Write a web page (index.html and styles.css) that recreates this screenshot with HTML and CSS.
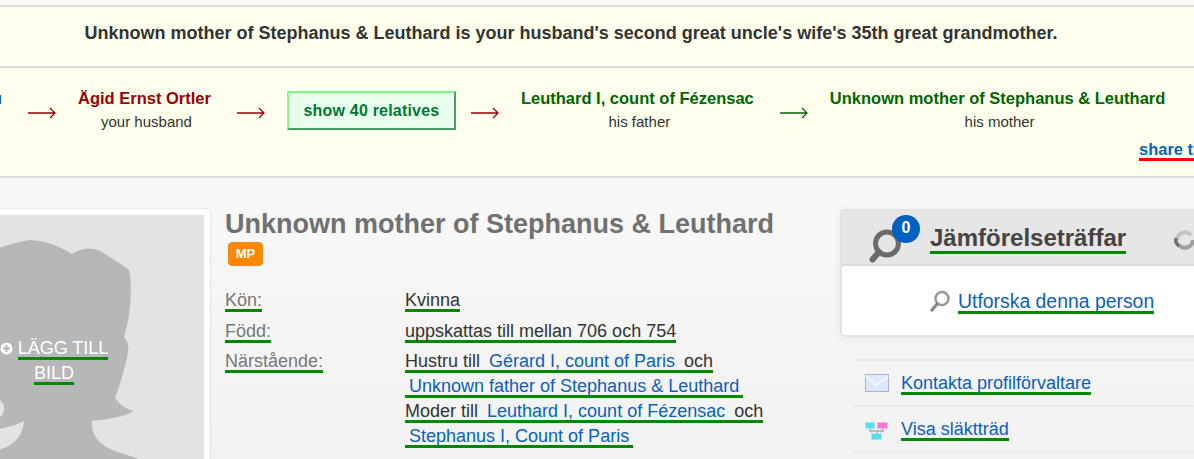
FILE: index.html
```html
<!DOCTYPE html>
<html lang="sv">
<head>
  <meta charset="UTF-8">
  <title>Unknown mother of Stephanus &amp; Leuthard</title>
  <link rel="stylesheet" href="styles.css">
</head>
<body>
  <div class="relation">
    <div class="relation-title">Unknown mother of Stephanus &amp; Leuthard is your husband's second great uncle's wife's 35th great grandmother.</div>

    <div class="relation-path">
      <div class="path-row">
        <div class="path-start"><a href="#">You</a></div>
        <svg class="arrow arrow-red" width="28" height="14" viewBox="0 0 28 14"><path d="M0 7H27M22 2L27 7L22 12"/></svg>
        <div class="path-person">
          <a class="name-red" href="#">Ägid Ernst Ortler</a>
          <span>your husband</span>
        </div>
        <svg class="arrow arrow-red" width="28" height="14" viewBox="0 0 28 14"><path d="M0 7H27M22 2L27 7L22 12"/></svg>
        <a class="show-btn" href="#">show 40 relatives</a>
        <svg class="arrow arrow-red" width="28" height="14" viewBox="0 0 28 14"><path d="M0 7H27M22 2L27 7L22 12"/></svg>
        <div class="path-person">
          <a class="name-green" href="#">Leuthard I, count of Fézensac</a>
          <span>his father</span>
        </div>
        <svg class="arrow arrow-green" width="28" height="14" viewBox="0 0 28 14"><path d="M0 7H27M22 2L27 7L22 12"/></svg>
        <div class="path-person">
          <a class="name-green" href="#">Unknown mother of Stephanus &amp; Leuthard</a>
          <span>his mother</span>
        </div>
      </div>
      <a class="share" href="#">share this</a>
    </div>
  </div>

  <div class="profile">
    <div class="photo-card">
      <svg class="silhouette" width="288" height="288" viewBox="-84 215 288 288">
        <path d="M-84 503V310C-60 275 -25 250 30 240C50 241 62 248 72 254C80 248 92 246 102 252C112 259 122 264 129 270C132 280 131 300 129 315C127 328 125 332 124 337C128 342 129 346 128 352C126 365 120 385 115 398C120 405 126 409 134 411C126 416 112 419 92 421C91 432 96 442 110 449C125 455 140 458 165 470V503Z"/>
        <path class="cutout" d="M-4 397C2 400 5 405 4 410C3 415 0 418 -4 420ZM-4 429C8 428 16 425 24 421C23 430 20 437 14 442C8 447 2 449 -4 451Z"/>
      </svg>
      <a class="add-photo" href="#"><svg class="plus" width="13" height="13" viewBox="0 0 13 13"><circle cx="6.5" cy="6.5" r="6" fill="#fff"/><path d="M3 6.5H10M6.5 3V10" stroke="#b6b7b9" stroke-width="2"/></svg> <span class="mark">LÄGG TILL BILD</span></a>
    </div>

    <div class="details">
      <h1>Unknown mother of Stephanus &amp; Leuthard</h1>
      <span class="mp-badge">MP</span>
      <div class="facts">
        <div class="fact-label"><span class="mark">Kön:</span></div>
        <div class="fact-value"><span class="mark">Kvinna</span></div>
        <div class="fact-label"><span class="mark">Född:</span></div>
        <div class="fact-value"><span class="mark">uppskattas till mellan 706 och 754</span></div>
        <div class="fact-label"><span class="mark">Närstående:</span></div>
        <div class="fact-value">
          <div><span class="mark">Hustru till <a href="#">Gérard I, count of Paris</a> och <a href="#">Unknown father of Stephanus &amp; Leuthard</a></span></div>
          <div><span class="mark">Moder till <a href="#">Leuthard I, count of Fézensac</a> och <a href="#">Stephanus I, Count of Paris</a></span></div>
        </div>
      </div>
    </div>

    <div class="sidebar">
      <div class="match-card">
        <div class="match-head">
          <div class="match-icon">
            <svg width="38" height="40" viewBox="0 0 38 40"><circle cx="19" cy="20.5" r="11.5" fill="none" stroke="#6b6b6b" stroke-width="5"/><path d="M11 29L4.5 36.5" stroke="#6b6b6b" stroke-width="6" stroke-linecap="round"/></svg>
            <span class="match-count">0</span>
          </div>
          <h2><span class="mark">Jämförelseträffar</span></h2>
          <svg class="refresh" width="24" height="22" viewBox="0 0 24 22"><path d="M4 11A8 8 0 0 1 18 6" fill="none" stroke="#c4c4c4" stroke-width="4"/><path d="M20 11A8 8 0 0 1 6 16" fill="none" stroke="#a0a0a0" stroke-width="4"/><path d="M3 9A8 8 0 0 0 6 17" fill="none" stroke="#707070" stroke-width="3.5"/></svg>
        </div>
        <div class="match-body">
          <svg width="22" height="22" viewBox="0 0 22 22"><circle cx="13" cy="8.5" r="6.5" fill="none" stroke="#999" stroke-width="2.5"/><path d="M8 14L3 20" stroke="#8c8c8c" stroke-width="3.5" stroke-linecap="round"/></svg>
          <a href="#"><span class="mark">Utforska denna person</span></a>
        </div>
      </div>

      <ul class="side-links">
        <li>
          <svg width="24" height="18" viewBox="0 0 24 18"><rect x="0.5" y="0.5" width="23" height="17" fill="#dfe8fa" stroke="#a3b5dc"/><path d="M1 2L12 11L23 2" fill="none" stroke="#f4f7fe" stroke-width="2"/></svg>
          <a href="#"><span class="mark">Kontakta profilförvaltare</span></a>
        </li>
        <li>
          <svg class="tree-icon" width="24" height="18" viewBox="0 0 24 18"><path d="M5 7V9H18V7M12 9V11" fill="none" stroke="#aaa" stroke-width="1.5"/><rect x="0.5" y="0.5" width="9" height="6" fill="#55ddf2" stroke="#a5e6ef"/><rect x="12.5" y="0.5" width="10" height="6" fill="#ff77d4" stroke="#f8b4e4"/><rect x="6.5" y="11.5" width="10" height="6" fill="#55ddf2" stroke="#a5e6ef"/></svg>
          <a href="#"><span class="mark">Visa släktträd</span></a>
        </li>
      </ul>
    </div>
  </div>
</body>
</html>
```

FILE: styles.css
```css
* {
  margin: 0;
  padding: 0;
  box-sizing: border-box;
}

html, body {
  height: 459px;
  overflow: hidden;
}

body {
  font-family: 'Liberation Sans', Arial, sans-serif;
  font-size: 18px;
  color: #333;
  background: #f8f8f7;
  padding-top: 5px;
}

a {
  color: #0a5fc0;
  text-decoration: none;
}

/* underlined spans, bar is a background so it sits close under the text */
.mark {
  padding-bottom: 2px;
  background: linear-gradient(#008800, #008800) left bottom / 100% 3px no-repeat;
  -webkit-box-decoration-break: clone;
  box-decoration-break: clone;
}

/* Relation banner */
.relation {
  background: #ffffee;
  border-top: 2px solid #dcdcdc;
}

.relation-title {
  height: 59px;
  padding-top: 16px;
  width: 1142px;
  text-align: center;
  font-size: 18px;
  line-height: 20px;
  font-weight: bold;
}

.relation-path {
  height: 112px;
  width: 1194px;
  border-top: 2px solid #dcdcdc;
  border-bottom: 2px solid #dcdcdc;
  padding-top: 22px;
  overflow: hidden;
  position: relative;
}

.path-row {
  display: flex;
  align-items: flex-start;
  margin-left: -60px;
  width: 1400px;
}

.path-start {
  width: 62px;
  text-align: right;
  font-size: 16.5px;
  font-weight: bold;
  line-height: 16px;
}

.arrow {
  flex: none;
  margin: 16px 22px 0 26px;
  fill: none;
  stroke-width: 1.3;
}

.arrow-red {
  stroke: #990000;
}

.arrow-green {
  stroke: #006600;
}

.path-person {
  text-align: center;
  white-space: nowrap;
}

.path-person a {
  display: block;
  font-size: 16.5px;
  font-weight: bold;
  line-height: 16px;
}

.path-person span {
  display: block;
  font-size: 15px;
  line-height: 16px;
  margin-top: 8px;
  padding-left: 4px;
}

.name-red {
  color: #990000;
}

.name-green {
  color: #006600;
}

.show-btn {
  flex: none;
  width: 169px;
  height: 39px;
  margin: 1px -11px 0 0;
  display: flex;
  align-items: center;
  justify-content: center;
  background: #e8ffee;
  border: 2px solid #77ff88;
  border-right-color: #4a9d68;
  border-bottom-color: #4a9d68;
  color: #007733;
  font-size: 16px;
  font-weight: bold;
  letter-spacing: 0.2px;
}

.share {
  position: absolute;
  left: 1139px;
  top: 72px;
  font-size: 16.5px;
  font-weight: bold;
  line-height: 18px;
  white-space: nowrap;
  border-bottom: 3px solid #ff0000;
}

/* Profile */
.profile {
  display: flex;
  align-items: flex-start;
  height: 281px;
  padding-top: 31px;
  margin-left: -90px;
  width: 1400px;
  background: linear-gradient(#f8f8f7, #f2f2f2);
}

.photo-card {
  flex: none;
  position: relative;
  width: 300px;
  height: 300px;
  padding: 6px;
  background: #fff;
  box-shadow: 0 0 3px rgba(0,0,0,0.15);
  border-radius: 2px;
}

.silhouette {
  display: block;
  background: #e3e3e3;
  fill: #b6b7b9;
}

.cutout {
  fill: #e3e3e3;
}

.add-photo {
  position: absolute;
  left: 84px;
  top: 127px;
  width: 120px;
  text-align: center;
  color: #fff;
  font-size: 18px;
  line-height: 25px;
}

.plus {
  vertical-align: -1px;
}

.details {
  flex: none;
  width: 600px;
  margin-left: 15px;
}

.details h1 {
  font-size: 27px;
  line-height: 30px;
  color: #707070;
}

.mp-badge {
  display: block;
  width: 35px;
  height: 24px;
  margin: 3px 0 0 3px;
  background: #ff8800;
  border: 1px solid #e88a20;
  border-radius: 4px;
  color: #fff;
  font-size: 13px;
  font-weight: bold;
  line-height: 22px;
  text-align: center;
}

.facts {
  display: grid;
  grid-template-columns: 180px 395px;
  margin-top: 22px;
  line-height: 25px;
  row-gap: 5.5px;
}

.fact-label {
  color: #777;
}

.fact-value a {
  white-space: nowrap;
  padding: 0 4px;
}

.sidebar {
  flex: none;
  width: 420px;
  margin-left: 15px;
}

.match-card {
  height: 128px;
  background: #fff;
  border: 2px solid #e2e2e2;
  border-radius: 5px;
  box-shadow: 0 2px 8px rgba(0,0,0,0.06);
  overflow: hidden;
}

.match-head {
  display: flex;
  align-items: center;
  height: 55px;
  background: #e6e6e6;
  border-bottom: 2px solid #dcdcdc;
  padding-left: 26px;
}

.match-icon {
  position: relative;
  width: 38px;
  height: 50px;
  padding-top: 10px;
}

.match-count {
  position: absolute;
  left: 24px;
  top: 2px;
  width: 28px;
  height: 28px;
  border-radius: 50%;
  background: #0060c0;
  color: #fff;
  font-size: 16px;
  font-weight: bold;
  line-height: 26px;
  text-align: center;
}

.match-head h2 {
  margin-left: 24px;
  font-size: 24px;
  line-height: 26px;
  color: #444;
}

.match-head .mark {
  padding-bottom: 3px;
}

.refresh {
  margin-left: 47px;
  margin-top: 4px;
}

.match-body {
  display: flex;
  align-items: center;
  height: 70px;
  padding: 0 0 0 87px;
  font-size: 19.4px;
  line-height: 24px;
  gap: 7px;
}

.side-links {
  list-style: none;
  margin: 22px 0 0 14px;
  border-top: 2px solid #ececec;
}

.side-links li {
  display: flex;
  align-items: center;
  height: 46px;
  padding-left: 11px;
  gap: 12px;
  font-size: 18px;
  border-bottom: 2px solid #ececec;
}

.tree-icon {
  margin-top: 3px;
}
```
